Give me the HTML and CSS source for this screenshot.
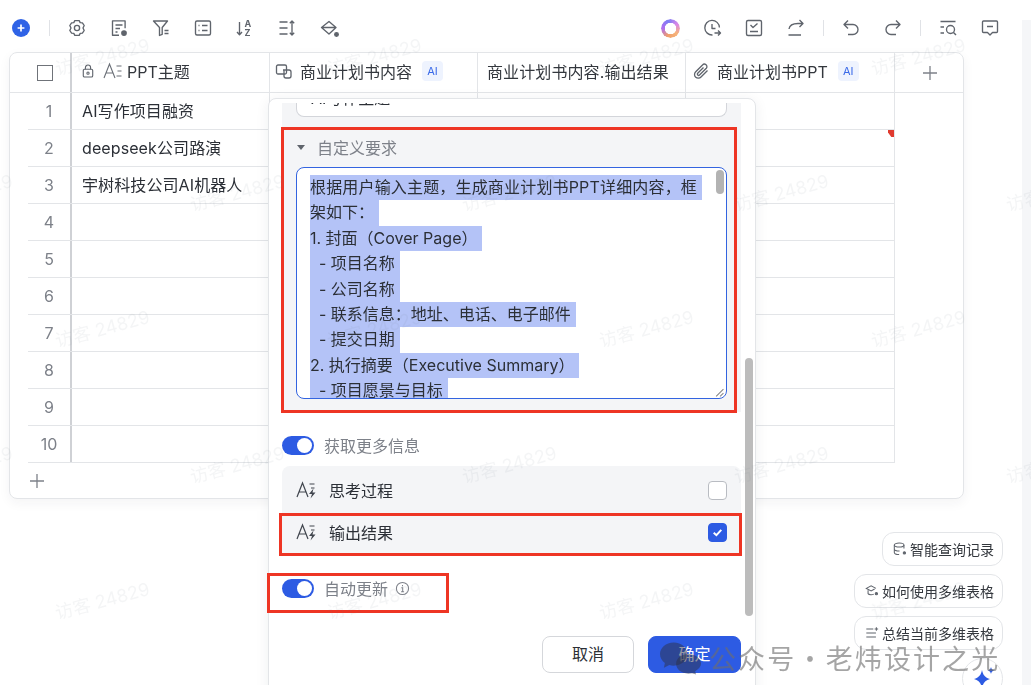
FILE: index.html
```html
<!DOCTYPE html>
<html lang="zh">
<head>
<meta charset="utf-8">
<title>多维表格</title>
<link rel="stylesheet" href="styles.css">
</head>
<body>
<div class="page">
  <div class="main">
    <div class="toolbar">
      <div class="tools">
        <span class="add-btn"><svg viewBox="0 0 18 18" class="ic18"><circle cx="9" cy="9" r="9" fill="#2f63e6"/><path d="M9 5.600v6.800M5.600 9h6.800" stroke="#fff" stroke-width="1.700"/></svg></span>
        <i class="divider div-a"></i>
        <svg class="ic" viewBox="0 0 20 20"><path d="M7.800 2.600h4.400l1 2 2.200.2 1.800 2.700-1.200 2.500 1.200 2.500-1.800 2.700-2.200.2-1 2H7.800l-1-2-2.200-.2L2.800 12.500 4 10 2.800 7.500l1.800-2.700 2.200-.2z"/><circle cx="10" cy="10" r="2.600"/></svg>
        <svg class="ic" viewBox="0 0 20 20"><path d="M10 17.200H3.500V2.800h12.600v7.500M6.500 7h7M6.500 10.500h4.500M6.500 14h2"/><circle cx="15" cy="15" r="2.200" fill="#5f646c"/></svg>
        <svg class="ic" viewBox="0 0 20 20"><path d="M2.500 3h14l-5.300 6.500v6.800l-2.700 1.200V9.500zM13.500 12.500h4M13.500 15.500h4"/></svg>
        <svg class="ic" viewBox="0 0 20 20"><rect x="2.500" y="3" width="15" height="14" rx="1.500"/><path d="M5.500 7.500h1M9 7.500h5.500M5.500 12.500h1M9 12.500h5.500"/></svg>
        <svg class="ic" viewBox="0 0 20 20"><path d="M4.500 4v12.500M2 14l2.500 2.700L7 14"/><text x="9.500" y="9" class="ic-letter">A</text><text x="9.500" y="18" class="ic-letter">Z</text></svg>
        <svg class="ic" viewBox="0 0 20 20"><path d="M2.500 4h8M2.500 10h8M2.500 16h8M15 3v14M12.800 5.200 15 3l2.200 2.200M12.800 14.800 15 17l2.200-2.200"/></svg>
        <svg class="ic" viewBox="0 0 20 20"><path d="M10 3.500 17 9.500 10 16 2.500 9.500zM3 9.500h13.500"/><circle cx="17.500" cy="16.500" r="1.800" fill="#5f646c"/></svg>
      </div>
      <div class="tools tools-right">
        <i class="ring"></i>
        <svg class="ic" viewBox="0 0 20 20"><path d="M10.500 17A7.300 7.300 0 1 1 17.400 9.500M10 6v4.500h3.500M12.500 15h6M16 12.500l2.500 2.500-2.500 2.500"/></svg>
        <svg class="ic" viewBox="0 0 20 20"><rect x="2.500" y="2.500" width="15" height="15" rx="1.500"/><path d="M6.500 7 9 9.500 13.500 5.500M6 13.500h8"/></svg>
        <svg class="ic" viewBox="0 0 20 20"><path d="M3 11c.5-3.500 3.500-5.500 9-5.500h5M13.500 2l3.500 3.500L13.500 9M2.500 17H15"/></svg>
        <i class="divider div-b"></i>
        <svg class="ic" viewBox="0 0 20 20"><path d="M7 2.500 3 6.500l4 4M3 6.500h9a4.800 4.800 0 0 1 0 10H7"/></svg>
        <svg class="ic" viewBox="0 0 20 20"><path d="M13 2.500l4 4-4 4M17 6.500H8a4.800 4.800 0 0 0 0 10h5"/></svg>
        <i class="divider div-c"></i>
        <svg class="ic" viewBox="0 0 20 20"><path d="M2.500 3.500h15M2.500 9h3.500M2.500 15h3.500"/><circle cx="12.500" cy="11.500" r="4"/><path d="M15.500 14.500l2.500 2.500"/></svg>
        <svg class="ic" viewBox="0 0 20 20"><path d="M3.500 3h13a1 1 0 0 1 1 1v9.500a1 1 0 0 1-1 1h-4L10 17l-2.500-2.500h-4a1 1 0 0 1-1-1V4a1 1 0 0 1 1-1zM7 8.500h6"/></svg>
      </div>
    </div>

    <div class="sheet">
      <div class="head">
        <div class="hcell hcheck"><span class="square"></span></div>
        <div class="hcell c1">
          <svg class="ic-lock" viewBox="0 0 14 16"><rect x="1.500" y="6" width="11" height="9" rx="1.500"/><path d="M4 6V4a3 3 0 0 1 6 0v2"/><circle cx="7" cy="10.500" r="1.300"/></svg>
          <svg class="ic-type" viewBox="0 0 19 18"><path d="M1 16 6.500 2 12 16M3 11h7M13.500 4h5M14.500 9h4M13.500 14h5"/></svg>
          <span>PPT主题</span>
        </div>
        <div class="hcell c2">
          <svg class="ic16" viewBox="0 0 18 18"><rect x="1.500" y="3" width="10" height="9" rx="1.500"/><path d="M8 8h6a2 2 0 0 1 2 2v4a2 2 0 0 1-2 2h-3a2 2 0 0 1-2-2V8"/></svg>
          <span>商业计划书内容</span><span class="ai">AI</span>
        </div>
        <div class="hcell c3"><span>商业计划书内容.输出结果</span></div>
        <div class="hcell c4">
          <svg class="ic16" viewBox="0 0 18 18"><path d="M15.500 8.500 9 15a3.700 3.700 0 0 1-5.500-5L10.500 3a2.500 2.500 0 0 1 3.800 3.300L7.500 13a1.200 1.200 0 0 1-1.800-1.700L11.500 5.500"/></svg>
          <span>商业计划书PPT</span><span class="ai">AI</span>
        </div>
        <div class="hcell cplus"><svg class="ic18" viewBox="0 0 18 18"><path class="thin" d="M9 2v14M2 9h14"/></svg></div>
      </div>
      <div class="rows">
        <div class="row"><div class="num">1</div><div class="cell c1">AI写作项目融资</div><div class="cell c2"></div><div class="cell c3"></div><div class="cell c4"></div></div>
        <div class="row"><div class="num">2</div><div class="cell c1">deepseek公司路演</div><div class="cell c2"></div><div class="cell c3"></div><div class="cell c4 flagged"></div></div>
        <div class="row"><div class="num">3</div><div class="cell c1">宇树科技公司AI机器人</div><div class="cell c2"></div><div class="cell c3"></div><div class="cell c4"></div></div>
        <div class="row"><div class="num">4</div><div class="cell c1"></div><div class="cell c2"></div><div class="cell c3"></div><div class="cell c4"></div></div>
        <div class="row"><div class="num">5</div><div class="cell c1"></div><div class="cell c2"></div><div class="cell c3"></div><div class="cell c4"></div></div>
        <div class="row"><div class="num">6</div><div class="cell c1"></div><div class="cell c2"></div><div class="cell c3"></div><div class="cell c4"></div></div>
        <div class="row"><div class="num">7</div><div class="cell c1"></div><div class="cell c2"></div><div class="cell c3"></div><div class="cell c4"></div></div>
        <div class="row"><div class="num">8</div><div class="cell c1"></div><div class="cell c2"></div><div class="cell c3"></div><div class="cell c4"></div></div>
        <div class="row"><div class="num">9</div><div class="cell c1"></div><div class="cell c2"></div><div class="cell c3"></div><div class="cell c4"></div></div>
        <div class="row"><div class="num">10</div><div class="cell c1"></div><div class="cell c2"></div><div class="cell c3"></div><div class="cell c4"></div></div>
      </div>
      <div class="add-row"><svg class="ic18" viewBox="0 0 18 18"><path class="thin" d="M9 2v14M2 9h14"/></svg></div>
    </div>
  </div>
  <div class="stripe"></div>

  <div class="modal">
    <div class="section">
      <div class="field"><span>AI写作主题</span></div>
      <div class="sec-title"><i class="tri"></i><span>自定义要求</span></div>
      <div class="textarea">
        <span class="ln wide">根据用户输入主题，生成商业计划书PPT详细内容，框</span>
        <span class="ln">架如下：</span>
        <span class="ln">1. 封面（Cover Page）</span>
        <span class="ln">  - 项目名称</span>
        <span class="ln">  - 公司名称</span>
        <span class="ln">  - 联系信息：地址、电话、电子邮件</span>
        <span class="ln">  - 提交日期</span>
        <span class="ln">2. 执行摘要（Executive Summary）</span>
        <span class="ln">  - 项目愿景与目标</span>
        <i class="ta-thumb"></i>
        <svg class="ta-grip" viewBox="0 0 8 8"><path d="M1 7.500 7.500 1M4.500 7.500l3-3"/></svg>
      </div>
    </div>
    <div class="toggle-row first"><i class="toggle"></i><span>获取更多信息</span></div>
    <div class="options">
      <div class="option"><svg class="ic-spark" viewBox="0 0 22 18"><path class="spark-line" d="M1 16 6.500 2 12 16M3 11h7M13.500 3h5M15 7h3.500"/><path class="spark-bolt" d="M17.500 7.500 13 13h3l-1.500 4.500 5-6h-3z"/></svg><span class="opt-label">思考过程</span><i class="box"></i></div>
      <div class="option"><svg class="ic-spark" viewBox="0 0 22 18"><path class="spark-line" d="M1 16 6.500 2 12 16M3 11h7M13.500 3h5M15 7h3.500"/><path class="spark-bolt" d="M17.500 7.500 13 13h3l-1.500 4.500 5-6h-3z"/></svg><span class="opt-label">输出结果</span><i class="box on"><svg viewBox="0 0 12 12"><path d="M2.500 6.200 5 8.500 9.500 3.500"/></svg></i></div>
    </div>
    <div class="toggle-row second"><i class="toggle"></i><span>自动更新</span><svg class="info" viewBox="0 0 16 16"><circle cx="8" cy="8" r="6.500"/><path d="M6.800 7.300H8.200V11.500M6.500 11.500h3.200M8 4.300v1.300"/></svg></div>
    <div class="footer"><span class="btn">取消</span><span class="btn primary">确定</span></div>
    <i class="modal-thumb"></i>
  </div>

  <div class="chips">
    <div class="chip"><svg class="ic14" viewBox="0 0 16 16"><ellipse cx="7" cy="3.500" rx="5.500" ry="2.300"/><path d="M1.500 3.500v8.500c0 1.300 2.500 2.300 5.500 2.300M12.500 3.500v4M1.500 8c0 1.300 2.500 2.300 6 2.300"/><circle cx="13" cy="12.500" r="1.300" fill="#5f646c"/></svg><span>智能查询记录</span></div>
    <div class="chip"><svg class="ic14" viewBox="0 0 16 16"><path d="M12.500 5 7 2 1.500 5 7 8l4-2.200M3.500 7v4c1 1.500 5 1.500 6.500.5"/><circle cx="13" cy="11" r="1.300" fill="#5f646c"/></svg><span>如何使用多维表格</span></div>
    <div class="chip"><svg class="ic14" viewBox="0 0 16 16"><path d="M1.500 3.500h8M1.500 8h11M1.500 12.500h11"/><path d="M13 1.500v4M11 3.500h4" /></svg><span>总结当前多维表格</span></div>
    <div class="star-btn"><svg viewBox="0 0 24 24"><path d="M10 3c1 5 3 7.500 8 9-5 1.500-7 4-8 9-1-5-3-7.500-8-9 5-1.500 7-4 8-9z"/><path d="M19 0c.4 2 1.200 3 3.200 3.500C20.200 4 19.400 5 19 7c-.4-2-1.200-3-3.200-3.500C17.800 3 18.600 2 19 0z"/></svg></div>
  </div>

  <i class="mark mark-a"></i>
  <i class="mark mark-b"></i>
  <i class="mark mark-c"></i>

  <div class="watermarks">
    <div class="wm-row"><span>访客 24829</span><span>访客 24829</span><span>访客 24829</span><span>访客 24829</span></div>
    <div class="wm-row shifted"><span>访客 24829</span><span>访客 24829</span><span>访客 24829</span><span>访客 24829</span><span>访客 24829</span></div>
    <div class="wm-row"><span>访客 24829</span><span>访客 24829</span><span>访客 24829</span><span>访客 24829</span></div>
    <div class="wm-row shifted"><span>访客 24829</span><span>访客 24829</span><span>访客 24829</span><span>访客 24829</span><span>访客 24829</span></div>
    <div class="wm-row"><span>访客 24829</span><span>访客 24829</span><span>访客 24829</span><span>访客 24829</span></div>
  </div>

  <div class="wechat">
    <svg class="bubbles" viewBox="0 0 42 33"><path d="M14 0C6 0 0 5.400 0 12c0 3.800 2 7 5 9.200L4 26l5.500-2.800c1.400.4 3 .6 4.500.6 8 0 14-5.200 14-11.800S22 0 14 0z"/><path d="M29 12c-7 0-12.500 4.500-12.500 10S22 32 29 32c1.300 0 2.600-.2 3.800-.5L37 33l-1-3.500c3.600-1.800 6-4.600 6-7.500 0-5.500-6-10-13-10z"/></svg>
    <span>公众号 · 老炜设计之光</span>
  </div>
</div>
</body>
</html>
```
FILE: styles.css
```css
* { box-sizing: border-box; }
html, body { margin: 0; background: #fff; }
body {
  font-family: Inter, "Noto Sans CJK SC", sans-serif;
  color: #2b2f36;
  font-size: 16px;
}
i { display: block; }
.page {
  position: relative;
  width: 1031px;
  height: 685px;
  overflow: hidden;
  display: flex;
  filter: blur(0.35px);
}
.main { width: 1022px; flex: none; }
.stripe { flex: 1; margin-top: 20px; background: #f5f6f8; }

/* toolbar */
.toolbar {
  height: 52px;
  padding: 19px 22px 0 12px;
  display: flex;
  justify-content: space-between;
  align-items: flex-start;
}
.tools { display: flex; align-items: center; height: 18px; gap: 22px; }
.add-btn { display: flex; margin-right: -3px; }
.divider { width: 1px; height: 16px; background: #e0e2e6; }
.div-a { margin-right: -5px; }
.div-b, .div-c { margin: 0 -5px; }
.ic { width: 20px; height: 20px; flex: none; fill: none; stroke: #5f646c; stroke-width: 1.35; stroke-linejoin: round; }
.ic-letter { font: 700 9px Inter, sans-serif; fill: #5f646c; stroke: none; }
.ic14 { width: 14px; height: 14px; flex: none; fill: none; stroke: #5f646c; stroke-width: 1.2; }
.ic16 { width: 18px; height: 18px; flex: none; fill: none; stroke: #5f646c; stroke-width: 1.3; }
.ic18 { width: 18px; height: 18px; flex: none; display: block; }
.ic-lock { width: 12px; height: 14px; flex: none; fill: none; stroke: #5f646c; stroke-width: 1.3; }
.ic-type { width: 19px; height: 18px; flex: none; fill: none; stroke: #6a6f77; stroke-width: 1.1; margin: 0 -2px 0 2px; }
.thin { stroke: #7d8189; stroke-width: 1.3; fill: none; }
.ring {
  width: 19px; height: 19px; border-radius: 50%;
  background: conic-gradient(from 200deg, #f0a06a, #b06df0, #7d7df5, #d985e8, #f6b37a, #f0a06a);
  -webkit-mask: radial-gradient(circle, transparent 5.500px, #000 6px);
  mask: radial-gradient(circle, transparent 5.500px, #000 6px);
}

/* sheet */
.sheet {
  width: 955px;
  height: 447px;
  margin-left: 9px;
  border: 1px solid #e3e5e8;
  border-radius: 8px;
  box-shadow: 0 4px 12px rgba(30, 40, 60, 0.05);
  display: flex;
  flex-direction: column;
  background: #fff;
}
.head {
  display: flex;
  height: 40px;
  flex: none;
  border-bottom: 1px solid #e3e5e8;
}
.hcell {
  display: flex;
  align-items: center;
  gap: 7px;
  border-right: 1px solid #e3e5e8;
  padding-left: 10px;
  padding-bottom: 3px;
  white-space: nowrap;
  color: #33373d;
}
.hcheck { width: 62px; padding-left: 27px; padding-bottom: 0; border-right: 2px solid #cfd1d5; }
.square { width: 16px; height: 16px; border: 1.700px solid #6f7379; display: block; }
.c1 { width: 198px; }
.c2 { width: 208px; }
.c3 { width: 208px; }
.c4 { width: 209px; }
.head .c2 { padding-left: 5px; }
.head .c3 { padding-left: 9px; letter-spacing: 0.1px; }
.head .c4 { padding-left: 6px; }
.cplus { flex: 1; border-right: 0; justify-content: center; padding: 0 0 0 2px; }
.ai {
  width: 21px; height: 20px; margin-left: 3px;
  background: #eef3fe; color: #3a6ae8;
  border-radius: 4px;
  font-size: 11px; line-height: 20px; text-align: center;
}
.rows { flex: none; margin-left: 18px; width: 867px; }
.row { display: flex; height: 37px; border-bottom: 1px solid #e3e5e8; border-right: 1px solid #e3e5e8; }
.num {
  width: 44px; flex: none;
  border-right: 2px solid #cfd1d5;
  color: #7d8189;
  text-align: center;
  line-height: 37px;
}
.cell {
  border-right: 1px solid #e3e5e8;
  padding-left: 10px;
  line-height: 37px;
  color: #2b2f36;
  white-space: nowrap;
  letter-spacing: 0.1px;
}
.row .c4 { width: 208px; border-right: 0; position: relative; }
.flagged::after {
  content: "";
  position: absolute;
  right: 0; top: 0;
  width: 6px; height: 7px;
  background: #e03a2e;
  clip-path: polygon(0 0, 100% 0, 100% 100%, 55% 100%, 0 35%);
}
.add-row { padding: 9px 0 0 18px; }

/* modal */
.modal {
  position: absolute;
  left: 268px; top: 98px;
  width: 488px; height: 610px;
  background: #fff;
  border: 1px solid #e3e5e8;
  border-radius: 8px;
  padding: 4px 14px 0 13px;
  box-shadow: 0 2px 14px rgba(30, 40, 60, 0.07);
}
.section {
  width: 459px;
  height: 309px;
  padding: 0 14px;
  background: #f4f5f7;
  overflow: hidden;
}
.field {
  height: 14px;
  background: #fff;
  border: 1px solid #d3d5da;
  border-top: 0;
  border-radius: 0 0 8px 8px;
  width: 431px;
  padding-left: 14px;
  overflow: hidden;
  line-height: 22px;
}
.field span { display: block; margin-top: -16px; }
.sec-title {
  display: flex; align-items: center;
  gap: 12px;
  height: 24px; margin-top: 18px;
  color: #7d8189;
  padding-left: 1px;
}
.tri { width: 0; height: 0; border-left: 4.500px solid transparent; border-right: 4.500px solid transparent; border-top: 5px solid #5f646c; }
.textarea {
  position: relative;
  width: 431px; height: 232px;
  margin-top: 8px;
  background: #fff;
  border: 1.200px solid #3364e0;
  border-radius: 8px;
  padding: 7px 0 0 13px;
  overflow: hidden;
}
.ln {
  display: block;
  width: fit-content;
  height: 25.400px;
  line-height: 25.400px;
  padding-right: 5px;
  background: #b4c3f7;
  white-space: pre;
  color: #2b2f36;
}
.ln.wide { letter-spacing: 0.17px; }
.ta-thumb { position: absolute; right: 2px; top: 2px; width: 8px; height: 24px; background: #b3b3b3; border-radius: 4px; }
.ta-grip { position: absolute; right: 2px; bottom: 1px; width: 9px; height: 9px; fill: none; stroke: #8a8a8a; stroke-width: 1; }
.toggle-row { display: flex; align-items: center; gap: 10px; color: #7d8189; height: 20px; }
.toggle-row.first { margin-top: 23px; }
.toggle-row.second { margin-top: 24px; }
.toggle { width: 32px; height: 19px; border-radius: 10px; background: #2d5be3; position: relative; }
.toggle::after { content: ""; position: absolute; right: 2px; top: 2px; width: 15px; height: 15px; border-radius: 50%; background: #fff; }
.info { width: 15px; height: 15px; margin-left: -3px; fill: none; stroke: #7d8189; stroke-width: 1.1; }
.options {
  width: 459px; height: 88px;
  margin-top: 11px; padding-top: 3px;
  background: #f4f5f7;
  border-radius: 8px 8px 0 0;
}
.option { display: flex; align-items: center; height: 42px; padding: 0 14px; }
.ic-spark { width: 22px; height: 18px; flex: none; margin-right: 11px; }
.spark-line { fill: none; stroke: #41464e; stroke-width: 1.2; }
.spark-bolt { fill: #41464e; }
.opt-label { flex: 1; color: #2b2f36; }
.box { width: 19px; height: 19px; border: 1.300px solid #b9bcc2; border-radius: 4px; background: #fff; }
.box.on { background: #2d5be3; border-color: #2d5be3; padding: 2px; }
.box.on svg { display: block; width: 13px; height: 13px; fill: none; stroke: #fff; stroke-width: 1.800; }
.footer { display: flex; justify-content: flex-end; gap: 14px; width: 459px; margin-top: 38px; }
.btn {
  width: 92px; height: 37px;
  border: 1px solid #d5d7db; border-radius: 8px;
  text-align: center; line-height: 35px;
  background: #fff; color: #2b2f36;
}
.btn.primary { width: 93px; background: #2d5be3; border-color: #2d5be3; color: #fff; }
.modal-thumb { position: absolute; right: 2px; top: 259px; width: 8px; height: 258px; border-radius: 4px; background: #bcbcbc; }

/* suggestion chips */
.chips {
  position: absolute;
  right: 28px; top: 532px;
  display: flex; flex-direction: column; align-items: flex-end;
  gap: 8px;
}
.chip {
  display: flex; align-items: center; gap: 3px;
  height: 34px; padding: 0 8px 0 10px;
  border: 1px solid #e3e5e8; border-radius: 12px;
  background: #fff;
  font-size: 14px; color: #33373d;
  white-space: nowrap;
}
.star-btn {
  width: 41px; height: 41px;
  border: 1px solid #e3e5e8; border-radius: 50%;
  background: #fff;
  padding: 8px 7px 7px 9px;
}
.star-btn svg { display: block; width: 24px; height: 24px; fill: #2d5be3; }

/* annotations */
.mark { position: absolute; border: 3px solid #ee3524; }
.mark-a { left: 281px; top: 127px; width: 456px; height: 286px; }
.mark-b { left: 279px; top: 513px; width: 463px; height: 43px; }
.mark-c { left: 267px; top: 573px; width: 182px; height: 40px; }

/* watermarks */
.watermarks {
  position: absolute; left: 0; top: 43px; right: 0;
  display: flex; flex-direction: column;
  gap: 100px;
  pointer-events: none;
}
.wm-row { display: flex; gap: 182px; padding-left: 55px; height: 36px; }
.wm-row.shifted { padding-left: 0; margin-left: -82px; }
.wm-row span {
  flex: none; width: 90px;
  white-space: nowrap;
  font-size: 18px;
  color: rgba(120, 125, 135, 0.08);
  transform: rotate(-15deg);
}

/* WeChat stamp */
.wechat {
  position: absolute; left: 660px; top: 640px;
  display: flex; align-items: center; gap: 8px;
  color: rgba(110, 110, 110, 0.62);
  font-family: "Noto Sans CJK SC", sans-serif;
  font-size: 27px; letter-spacing: 2.100px; word-spacing: -8px;
  line-height: 36px;
  white-space: nowrap;
}
.bubbles { width: 41px; height: 33px; fill: rgba(45, 50, 70, 0.5); }
```
